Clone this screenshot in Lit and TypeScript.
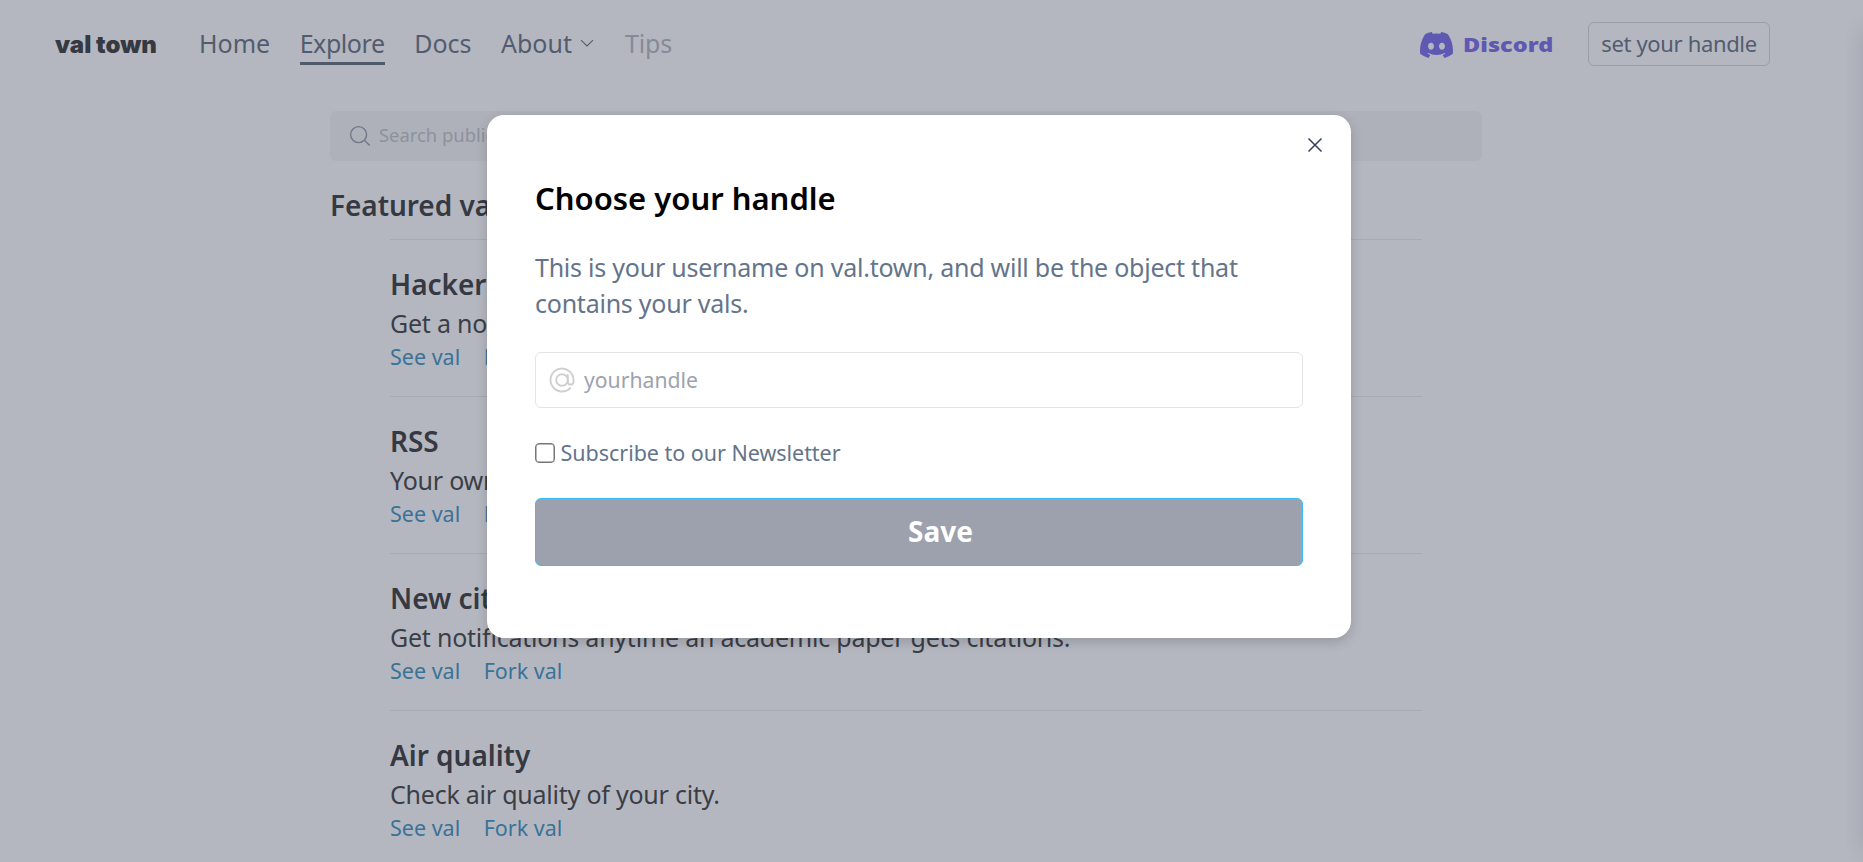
import { LitElement, html, css } from "lit";
import { customElement, property } from "lit/decorators.js";

interface Val {
  title: string;
  text: string;
}

const vals: Val[] = [
  { title: "Hacker News", text: "Get a notification when you are mentioned." },
  { title: "RSS", text: "Your own RSS reader in your inbox." },
  { title: "New citations", text: "Get notifications anytime an academic paper gets citations." },
  { title: "Air quality", text: "Check air quality of your city." },
];

@customElement("site-header")
class SiteHeader extends LitElement {
  static styles = css`
    :host { display: block; }
    .bar {
      display: flex;
      align-items: center;
      height: 89px;
      padding: 0 93px 0 55px;
      box-sizing: border-box;
      color: #535c6e;
      font-size: 25px;
      line-height: 38px;
    }
    .logo {
      width: 144px;
      font: 900 24px/38px Inter, sans-serif;
      color: #363941;
    }
    nav { display: flex; gap: 29.5px; flex: 1; }
    .item { display: flex; align-items: center; border-bottom: 3px solid transparent; }
    .active { letter-spacing: -0.43px; border-bottom-color: #515a6c; }
    .muted { color: #868a96; letter-spacing: -0.15px; }
    .chev { width: 16px; height: 16px; margin-left: 7.5px; display: block; }
    .discord { display: flex; align-items: center; color: #5f59b2; width: 168px; }
    .mark { width: 33px; height: 26px; display: block; margin-right: 10px; }
    .word {
      font-weight: 900;
      font-size: 18.5px;
      line-height: 26px;
      transform: scaleX(1.27);
      transform-origin: 0 50%;
    }
    .handle {
      box-sizing: border-box;
      width: 182px;
      height: 44px;
      margin-bottom: 1px;
      border: 1px solid #9a9eaa;
      border-radius: 6px;
      text-align: center;
      font-size: 22px;
      line-height: 40px;
      letter-spacing: -0.35px;
    }
  `;
  render() {
    return html`<header class="bar">
      <div class="logo">val town</div>
      <nav>
        <span class="item">Home</span>
        <span class="item active">Explore</span>
        <span class="item">Docs</span>
        <span class="item">About
          <svg class="chev" viewBox="0 0 16 16" fill="none" stroke="currentColor" stroke-width="1.1">
            <path d="M2 5.2l6 5.8 6-5.8" />
          </svg></span>
        <span class="item muted">Tips</span>
      </nav>
      <div class="discord">
        <svg class="mark" viewBox="0 0 127.14 96.36" preserveAspectRatio="none" fill="currentColor">
          <path d="M107.7,8.07A105.15,105.15,0,0,0,81.47,0a72.06,72.06,0,0,0-3.36,6.83A97.68,97.68,0,0,0,49,6.83,72.37,72.37,0,0,0,45.64,0,105.89,105.89,0,0,0,19.39,8.09C2.79,32.65-1.71,56.6.54,80.21h0A105.73,105.73,0,0,0,32.71,96.36,77.7,77.7,0,0,0,39.6,85.25a68.42,68.42,0,0,1-10.85-5.18c.91-.66,1.8-1.34,2.66-2a75.57,75.57,0,0,0,64.32,0c.87.71,1.76,1.39,2.66,2a68.68,68.68,0,0,1-10.87,5.19,77,77,0,0,0,6.89,11.1A105.25,105.25,0,0,0,126.6,80.22h0C129.24,52.84,122.09,29.11,107.7,8.07ZM42.45,65.69C36.18,65.69,31,60,31,53s5-12.74,11.43-12.74S54,46,53.89,53,48.84,65.69,42.45,65.69Zm42.24,0C78.41,65.69,73.25,60,73.25,53s5-12.74,11.44-12.74S96.23,46,96.12,53,91.08,65.69,84.69,65.69Z" />
        </svg>
        <span class="word">Discord</span>
      </div>
      <div class="handle">set your handle</div>
    </header>`;
  }
}

@customElement("val-row")
class ValRow extends LitElement {
  @property({ attribute: false }) val!: Val;
  static styles = css`
    :host { display: block; }
    .row { border-top: 1px solid #a7aab3; padding: 24px 0; }
    .title { font-weight: 600; font-size: 28px; line-height: 40px; letter-spacing: -0.02px; }
    .text { margin-top: 1px; font-size: 25px; line-height: 36px; letter-spacing: -0.23px; color: #3b3e47; font-variant-ligatures: none; }
    .links { display: flex; gap: 23.5px; margin-top: 1px; font-size: 21.5px; line-height: 30px; color: #3a7298; }
  `;
  render() {
    return html`<div class="row">
      <div class="title">${this.val.title}</div>
      <div class="text">${this.val.text}</div>
      <div class="links"><span>See val</span><span>Fork val</span></div>
    </div>`;
  }
}

@customElement("handle-dialog")
class HandleDialog extends LitElement {
  static styles = css`
    :host { display: block; }
    .dialog {
      position: relative;
      box-sizing: border-box;
      width: 864px;
      height: 523px;
      padding: 61px 48px 0;
      border-radius: 17px;
      background: #fff;
      box-shadow: 0 4px 12px rgba(0, 0, 0, 0.17);
      color: #64748b;
    }
    .close { position: absolute; top: 21px; right: 27px; width: 18px; height: 18px; }
    h2 { margin: 0 0 29px; font-weight: 600; font-size: 31px; line-height: 44px; color: #000; }
    p { margin: 0 0 31px; font-size: 25px; line-height: 36px; letter-spacing: -0.24px; }
    .field {
      box-sizing: border-box;
      display: flex;
      align-items: center;
      height: 56px;
      padding-left: 13px;
      border: 1px solid #e2e4e7;
      border-radius: 6px;
      color: #9ca3af;
      font-size: 21.2px;
    }
    .at { width: 26px; height: 26px; margin-right: 9px; }
    .field span { padding-bottom: 1px; }
    .check { display: flex; align-items: center; height: 20px; margin: 35px 0; font-size: 21.5px; line-height: 20px; letter-spacing: -0.03px; }
    .box {
      box-sizing: border-box;
      width: 20px;
      height: 20px;
      margin-right: 5.5px;
      border: 1px solid #767676;
      border-radius: 4px;
      box-shadow: inset 0 0 0 0.5px #767676;
    }
    .save {
      box-sizing: border-box;
      height: 68px;
      padding-left: 43px;
      border: 1px solid #38bdf8;
      border-radius: 6px;
      background: #9ca1ad;
      color: #fff;
      text-align: center;
      font-weight: 700;
      font-size: 28px;
      line-height: 65px;
    }
  `;
  render() {
    return html`<div class="dialog">
      <svg class="close" viewBox="0 0 18 18" stroke="#334155" stroke-width="1.5" fill="none">
        <path d="M2.5 2.5l13 13M15.5 2.5l-13 13" />
      </svg>
      <h2>Choose your handle</h2>
      <p>This is your username on val.town, and will be the object that<br />contains your vals.</p>
      <div class="field">
        <svg class="at" viewBox="0 0 26 26" fill="none" stroke="#cfcfcf" stroke-width="1.9">
          <circle cx="13" cy="13" r="5.8" />
          <path d="M18.8 8v7.2a2.9 2.9 0 0 0 5.7 0V13a11.5 11.5 0 1 0-3.3 8.1" stroke-linecap="round" />
        </svg>
        <span>yourhandle</span>
      </div>
      <div class="check"><span class="box"></span>Subscribe to our Newsletter</div>
      <div class="save">Save</div>
    </div>`;
  }
}

@customElement("app-root")
class AppRoot extends LitElement {
  static styles = css`
    :host {
      display: block;
      position: relative;
      height: 862px;
      overflow: hidden;
      background: #b4b7c0;
      color: #363941;
      font-family: "Noto Sans", "Open Sans", sans-serif;
    }
    .main { width: 1152px; margin: 22px 0 0 330px; }
    .search {
      display: flex;
      align-items: center;
      height: 50px;
      padding-left: 19px;
      border-radius: 6px;
      background: #aeb1b9;
      color: #8c919e;
      font-size: 18.4px;
      line-height: 28px;
    }
    .search span { padding-bottom: 2px; }
    .glass { width: 22px; height: 22px; margin-right: 8px; color: #6f7889; }
    .heading { margin: 24px 0 14px; font-weight: 600; font-size: 28px; line-height: 40px; letter-spacing: -0.05px; }
    .list { padding: 0 60px; }
    .modal { position: absolute; left: 487px; top: 115px; }
    .edge {
      position: absolute;
      right: -20px;
      top: 30px;
      bottom: 10px;
      width: 20px;
      box-shadow: 0 0 20px rgba(40, 40, 60, 0.14);
    }
  `;
  render() {
    return html`
      <site-header></site-header>
      <div class="main">
        <div class="search">
          <svg class="glass" viewBox="0 0 22 22" fill="none" stroke="currentColor" stroke-width="1.4">
            <circle cx="9.6" cy="9.6" r="8" />
            <path d="M15.3 15.3l5.5 5.3" />
          </svg>
          <span>Search public vals</span>
        </div>
        <div class="heading">Featured vals</div>
        <div class="list">${vals.map((v) => html`<val-row .val=${v}></val-row>`)}</div>
      </div>
      <handle-dialog class="modal"></handle-dialog>
      <div class="edge"></div>
    `;
  }
}
